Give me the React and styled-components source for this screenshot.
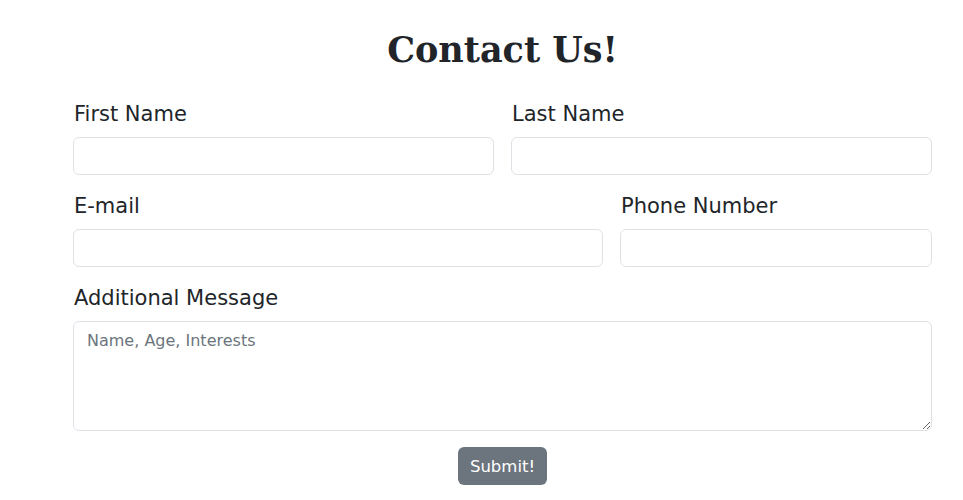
import styled, { createGlobalStyle } from "styled-components";

const GlobalStyle = createGlobalStyle`
  body {
    margin: 0;
    background: #fff;
    color: #212529;
    font-family: "DejaVu Sans", "Open Sans", sans-serif;
  }
  * {
    box-sizing: border-box;
  }
`;

const Page = styled.div`
  padding: 29px 31px 0 73px;
`;

const Title = styled.h1`
  margin: 0 0 28px;
  text-align: center;
  font-family: "DejaVu Serif", "Liberation Serif", serif;
  font-weight: 700;
  font-size: 35px;
  line-height: 42px;
  color: #212529;
`;

const Form = styled.form`
  display: flex;
  flex-direction: column;
  gap: 16px;
`;

const Row = styled.div`
  display: grid;
  grid-template-columns: ${(p) => p.$cols || "1fr 1fr"};
  column-gap: 17px;
`;

const Field = styled.div`
  display: flex;
  flex-direction: column;
`;

const Label = styled.label`
  display: block;
  font-size: 21px;
  font-weight: 500;
  line-height: 30px;
  margin-bottom: 8px;
  padding-left: 1px;
  color: #212529;
`;

const Input = styled.input`
  display: block;
  width: 100%;
  height: 38px;
  padding: 6px 12px;
  border: 1px solid #dee2e6;
  border-radius: 6px;
  font: inherit;
  font-size: 16px;
  background: #fff;
  outline: none;
`;

const TextArea = styled.textarea`
  display: block;
  width: 100%;
  height: 110px;
  padding: 7px 13px;
  border: 1px solid #dee2e6;
  border-radius: 6px;
  font-family: inherit;
  font-size: 16px;
  line-height: 1.5;
  resize: vertical;
  outline: none;
  &::placeholder {
    color: #6c757d;
  }
`;

const Actions = styled.div`
  display: flex;
  justify-content: center;
`;

const Button = styled.button`
  height: 38px;
  padding: 0 12px;
  border: none;
  border-radius: 6px;
  background: #6c757d;
  color: #fff;
  font-family: inherit;
  font-size: 16.5px;
  cursor: pointer;
`;

export default function App() {
  return (
    <>
      <GlobalStyle />
      <Page>
        <Title>Contact Us!</Title>
        <Form onSubmit={(e) => e.preventDefault()}>
          <Row>
            <Field>
              <Label htmlFor="first">First Name</Label>
              <Input id="first" type="text" />
            </Field>
            <Field>
              <Label htmlFor="last">Last Name</Label>
              <Input id="last" type="text" />
            </Field>
          </Row>
          <Row $cols="530fr 312fr">
            <Field>
              <Label htmlFor="email">E-mail</Label>
              <Input id="email" type="email" />
            </Field>
            <Field>
              <Label htmlFor="phone">Phone Number</Label>
              <Input id="phone" type="tel" />
            </Field>
          </Row>
          <Row $cols="1fr">
            <Field>
              <Label htmlFor="msg">Additional Message</Label>
              <TextArea id="msg" placeholder="Name, Age, Interests" />
            </Field>
          </Row>
          <Actions>
            <Button type="submit">Submit!</Button>
          </Actions>
        </Form>
      </Page>
    </>
  );
}
